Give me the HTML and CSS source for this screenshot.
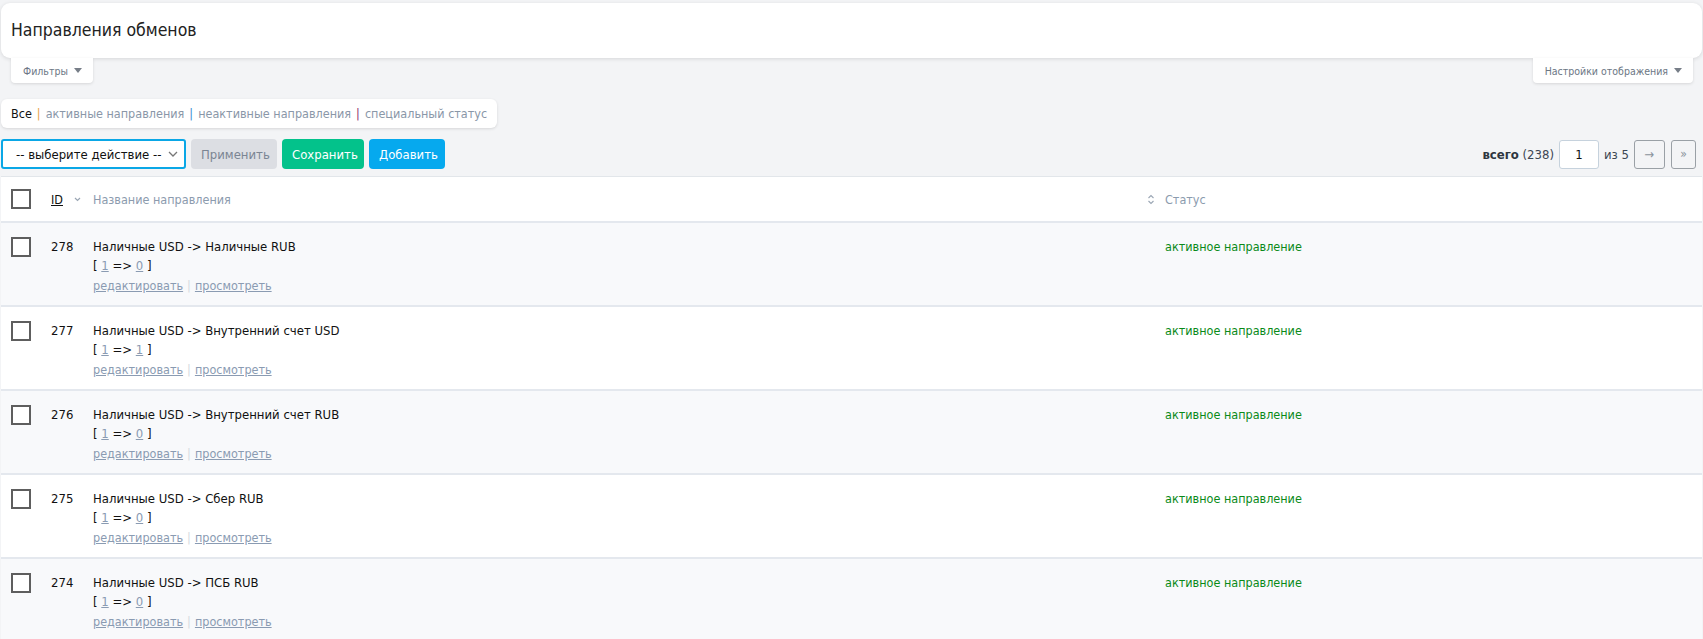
FILE: index.html
```html
<!DOCTYPE html>
<html lang="ru">
<head>
<meta charset="utf-8">
<title>Направления обменов</title>
<link rel="stylesheet" href="styles.css">
</head>
<body>
<div class="page">
  <div class="title-card"><h1>Направления обменов</h1></div>
  <div class="toggles">
    <button class="toggle">Фильтры <span class="tri"></span></button>
    <button class="toggle">Настройки отображения <span class="tri"></span></button>
  </div>
  <div class="tabs">
    <span class="tab current">Все</span><span class="sep s1">|</span><span class="tab">активные направления</span><span class="sep s2">|</span><span class="tab">неактивные направления</span><span class="sep s3">|</span><span class="tab">специальный статус</span>
  </div>
  <div class="actions">
    <div class="left-actions">
      <div class="select-wrap">
        <select class="action-select"><option>-- выберите действие --</option></select>
        <svg class="chev" width="10" height="6" viewBox="0 0 10 6"><path d="M1 1l4 4 4-4" fill="none" stroke="#777" stroke-width="1.3"/></svg>
      </div>
      <button class="btn btn-apply">Применить</button>
      <button class="btn btn-save">Сохранить</button>
      <button class="btn btn-add">Добавить</button>
    </div>
    <div class="pager">
      <span class="total"><b>всего</b> (238)</span>
      <input class="page-input" type="text" value="1">
      <span class="of">из 5</span>
      <button class="pbtn next">→</button>
      <button class="pbtn last">»</button>
    </div>
  </div>
  <div class="table">
    <div class="row head">
      <div class="c-check"><span class="cb"></span></div>
      <div class="c-id"><span class="id-link">ID</span><svg class="sort-down" width="7" height="5" viewBox="0 0 7 5"><path d="M1 1l2.5 2.5L6 1" fill="none" stroke="#9aa6b4" stroke-width="1.2"/></svg></div>
      <div class="c-name head-label"><span>Название направления</span><svg class="sort-both" width="8" height="11" viewBox="0 0 8 11"><path d="M1.5 4l2.5-2.5L6.5 4M1.5 7l2.5 2.5L6.5 7" fill="none" stroke="#9aa6b4" stroke-width="1.1"/></svg></div>
      <div class="c-status head-label">Статус</div>
    </div>
    <div class="row odd">
      <div class="c-check"><span class="cb"></span></div>
      <div class="c-id">278</div>
      <div class="c-name"><div class="dir">Наличные USD -&gt; Наличные RUB</div><div class="dir">[ <a>1</a> =&gt; <a>0</a> ]</div><div class="links"><a>редактировать</a><span class="lsep">|</span><a>просмотреть</a></div></div>
      <div class="c-status active">активное направление</div>
    </div>
    <div class="row">
      <div class="c-check"><span class="cb"></span></div>
      <div class="c-id">277</div>
      <div class="c-name"><div class="dir">Наличные USD -&gt; Внутренний счет USD</div><div class="dir">[ <a>1</a> =&gt; <a>1</a> ]</div><div class="links"><a>редактировать</a><span class="lsep">|</span><a>просмотреть</a></div></div>
      <div class="c-status active">активное направление</div>
    </div>
    <div class="row odd">
      <div class="c-check"><span class="cb"></span></div>
      <div class="c-id">276</div>
      <div class="c-name"><div class="dir">Наличные USD -&gt; Внутренний счет RUB</div><div class="dir">[ <a>1</a> =&gt; <a>0</a> ]</div><div class="links"><a>редактировать</a><span class="lsep">|</span><a>просмотреть</a></div></div>
      <div class="c-status active">активное направление</div>
    </div>
    <div class="row">
      <div class="c-check"><span class="cb"></span></div>
      <div class="c-id">275</div>
      <div class="c-name"><div class="dir">Наличные USD -&gt; Сбер RUB</div><div class="dir">[ <a>1</a> =&gt; <a>0</a> ]</div><div class="links"><a>редактировать</a><span class="lsep">|</span><a>просмотреть</a></div></div>
      <div class="c-status active">активное направление</div>
    </div>
    <div class="row odd">
      <div class="c-check"><span class="cb"></span></div>
      <div class="c-id">274</div>
      <div class="c-name"><div class="dir">Наличные USD -&gt; ПСБ RUB</div><div class="dir">[ <a>1</a> =&gt; <a>0</a> ]</div><div class="links"><a>редактировать</a><span class="lsep">|</span><a>просмотреть</a></div></div>
      <div class="c-status active">активное направление</div>
    </div>
  </div>
</div>
</body>
</html>
```
FILE: styles.css
```css
* { box-sizing: border-box; }
html, body { margin: 0; padding: 0; }
body {
  background: #f3f4f6;
  font-family: "DejaVu Sans Condensed", "DejaVu Sans", sans-serif;
  color: #111;
  font-size: 12px;
}
.page { padding: 3px 1px 0 1px; }

.title-card {
  background: #fff;
  border-radius: 9px;
  height: 55px;
  box-shadow: 0 1px 4px rgba(0,0,0,0.12);
  display: flex;
  align-items: center;
  padding: 0 10px;
}
.title-card h1 {
  margin: 0;
  font-weight: normal;
  font-size: 17.5px;
  color: #222;
  margin-top: -2px;
}

.toggles {
  display: flex;
  justify-content: space-between;
  padding: 0 9px 0 10px;
}
.toggle {
  height: 25px;
  background: #fff;
  border: 0;
  border-radius: 0 0 4px 4px;
  box-shadow: 0 1px 3px rgba(0,0,0,0.12);
  font-family: inherit;
  font-size: 10.5px;
  color: #6c7785;
  padding: 0 11px 0 12px;
  display: flex;
  align-items: center;
  gap: 4px;
}
.tri {
  width: 0; height: 0;
  border-left: 4px solid transparent;
  border-right: 4px solid transparent;
  border-top: 5px solid #777e88;
  margin-left: 2px;
}

.tabs {
  margin-top: 16px;
  display: inline-flex;
  align-items: center;
  height: 29px;
  padding: 0 10px;
  background: #fff;
  border-radius: 6px;
  box-shadow: 0 1px 3px rgba(0,0,0,0.12);
  font-size: 12.5px;
  color: #8a97a8;
}
.tab.current { color: #111; }
.sep { margin: 0 5px; }
.s1 { color: #e8a23f; }
.s2 { color: #3a8ed2; }
.s3 { color: #8c2d6a; }

.actions {
  margin-top: 11px;
  display: flex;
  justify-content: space-between;
  align-items: center;
  height: 30px;
  padding-right: 6px;
}
.left-actions { display: flex; align-items: center; gap: 5px; }
.select-wrap { position: relative; }
.action-select {
  appearance: none;
  -webkit-appearance: none;
  width: 185px;
  height: 30px;
  border: 2px solid #0aa7e6;
  border-radius: 3px;
  background: #fff;
  font-family: inherit;
  font-size: 13px;
  color: #111;
  padding: 0 0 0 13px;
  outline: none;
}
.chev { position: absolute; right: 8px; top: 12px; pointer-events: none; }
.btn {
  height: 30px;
  border: 0;
  border-radius: 4px;
  font-family: inherit;
  font-size: 13px;
  padding: 0 10px;
  color: #fff;
}
.btn-apply { background: #dcdee3; color: #7b8593; width: 86px; }
.btn-save { background: #03c28b; width: 82px; }
.btn-add { background: #06a9ee; width: 76px; }

.pager { display: flex; align-items: center; font-size: 13px; color: #3c4653; }
.total b { color: #2d3640; }
.page-input {
  width: 40px; height: 29px;
  margin-left: 5px;
  border: 1px solid #c6d2dd;
  border-radius: 3px;
  text-align: center;
  font-family: inherit;
  font-size: 13px;
  color: #111;
}
.of { margin: 0 5px; }
.pbtn {
  height: 29px;
  background: transparent;
  border: 1px solid #9aa0a6;
  border-radius: 3px;
  font-family: inherit;
  color: #8a939c;
  font-size: 13px;
  padding: 0;
}
.next { width: 31px; }
.last { width: 25px; margin-left: 6px; font-size: 12px; }

.table {
  margin-top: 7px;
  border-top: 1px solid #e2e6ea;
  background: #fff;
}
.row {
  display: flex;
  border-bottom: 2px solid #e4e8ee;
  background: #fff;
  height: 84px;
  padding-top: 14px;
  line-height: 19px;
  font-size: 12.5px;
}
.row.odd { background: #f8f9fb; }
.row.head { height: 46px; padding-top: 0; align-items: center; }
.c-check { width: 50px; padding-left: 10px; }
.cb {
  display: block;
  width: 20px; height: 20px;
  border: 2px solid #5e5e5e;
  background: #fff;
}
.c-id { width: 42px; display: flex; align-items: flex-start; gap: 11px; font-size: 13px; }
.head .c-id { align-items: center; font-size: 12.5px; }
.id-link { color: #111; text-decoration: underline; }
.sort-down { margin-top: 1px; }
.c-name { width: 1072px; }
.dir { font-size: 13px; }
.head .c-name { display: flex; justify-content: space-between; align-items: center; padding-right: 10px; }
.head-label { color: #8c9bae; }
.c-name a { color: #8a9bb2; text-decoration: underline; }
.links { margin-top: 1px; }
.lsep { color: #d5dae0; margin: 0 4px; }
.c-status.active { color: #0a8a19; }
```
